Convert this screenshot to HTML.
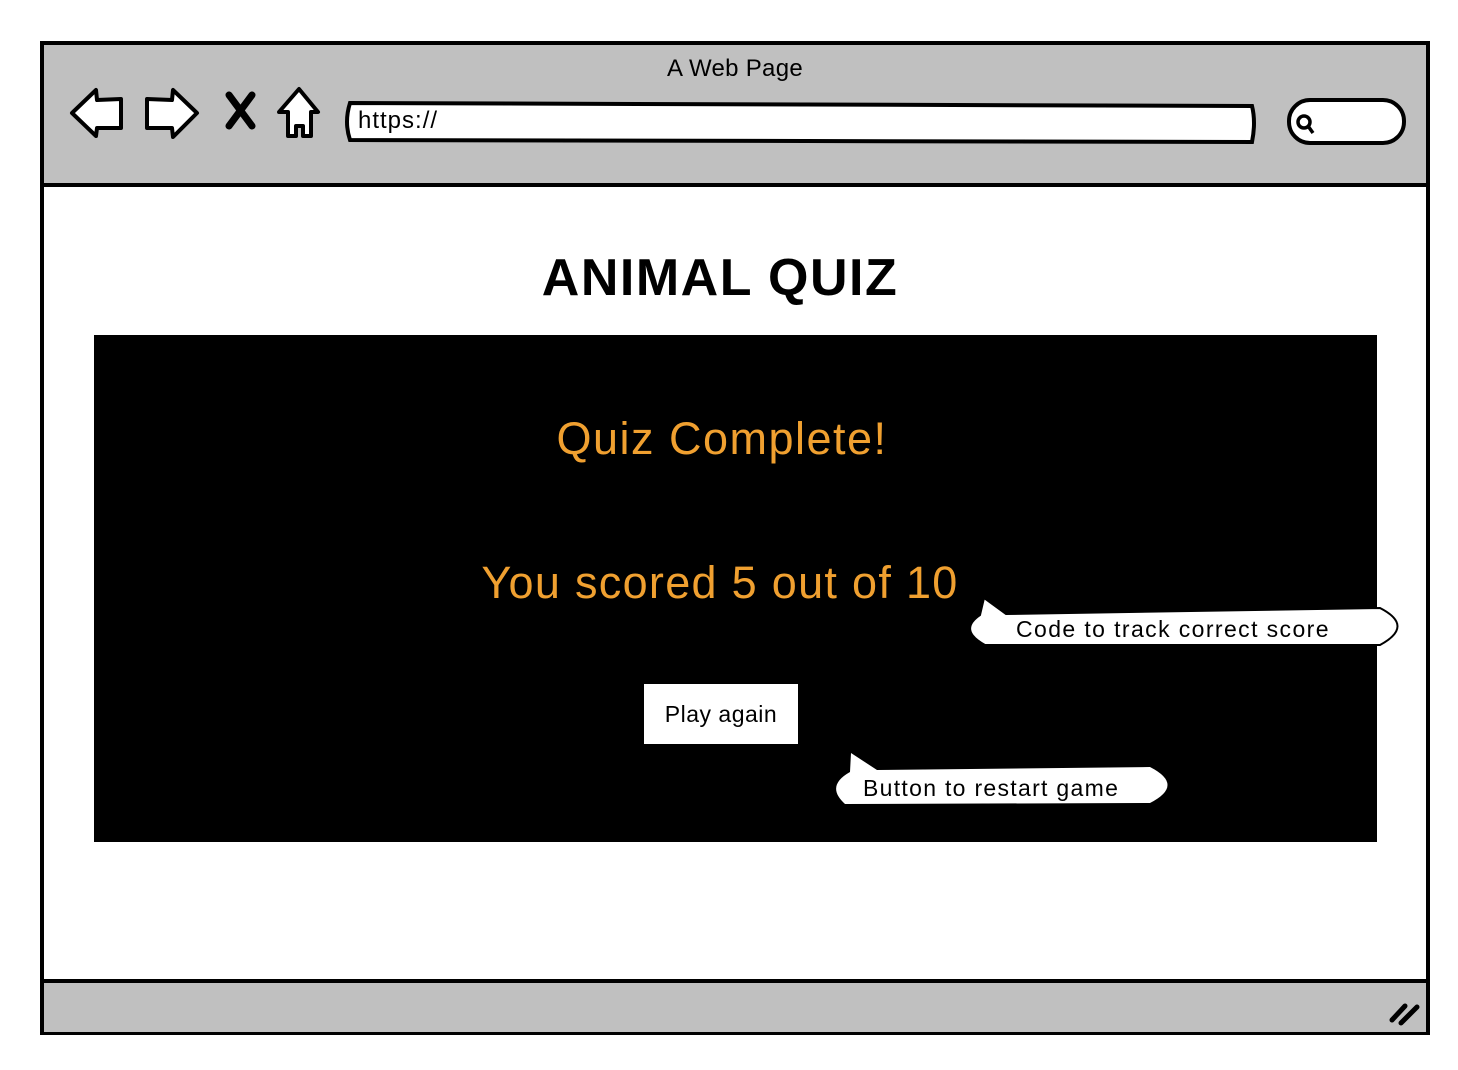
<!DOCTYPE html>
<html><head><meta charset="utf-8"><style>
body{margin:0;width:1458px;height:1070px;background:#fff;position:relative;overflow:hidden;font-family:"Liberation Sans",sans-serif}
.abs{position:absolute}
</style></head><body>
<svg class="abs" style="left:0;top:0" width="1458" height="1070">
<rect x="42" y="43" width="1386" height="990" fill="#fff" stroke="#000" stroke-width="4"/>
<rect x="44" y="45" width="1382" height="140" fill="#c0c0c0"/>
<line x1="42" y1="185" x2="1428" y2="185" stroke="#000" stroke-width="4"/>
<rect x="44" y="982" width="1382" height="50" fill="#c0c0c0"/>
<line x1="42" y1="981" x2="1428" y2="981" stroke="#000" stroke-width="4"/>
<path d="M1392 1020 L1405 1006 M1401 1023 L1417 1007" stroke="#000" stroke-width="5" stroke-linecap="round"/>
<path d="M72 113 L96 90 L97 100 L121 99 L121 128 L97 128 L96 136 Z" fill="#fff" stroke="#000" stroke-width="4" stroke-linejoin="round"/>
<path d="M197 113 L173 90 L172 100 L147 99 L147 128 L172 128 L173 137 Z" fill="#fff" stroke="#000" stroke-width="4" stroke-linejoin="round"/>
<path d="M229 95 L252 126 M252 95 L229 126" stroke="#000" stroke-width="7" stroke-linecap="round"/>
<path d="M299 89 L318 112 L311 112 L311 136 L303 136 L303 126 L296 126 L296 136 L288 136 L288 112 L279 112 Z" fill="#fff" stroke="#000" stroke-width="4" stroke-linejoin="round"/>
<path d="M350 103 L1252 106 Q1256 122 1252 142 L350 140 Q344 122 350 103 Z" fill="#fff" stroke="#000" stroke-width="4"/>
<rect x="1289" y="100" width="115" height="43" rx="21" fill="#fff" stroke="#000" stroke-width="4"/>
<circle cx="1304" cy="122" r="6" fill="none" stroke="#000" stroke-width="3.5"/>
<line x1="1308" y1="126" x2="1313" y2="133" stroke="#000" stroke-width="3.5"/>
<rect x="94" y="335" width="1283" height="507" fill="#000"/>
<rect x="644" y="684" width="154" height="60" fill="#fff"/>
<path d="M984 598 L1006 614 L1380 608 Q1415 626 1380 645 L985 645 Q958 630 980 615 Z" fill="#fff" stroke="#000" stroke-width="2"/>
<path d="M851 753 L877 770 L1150 767 Q1185 785 1150 803 L845 804 Q825 786 850 772 Z" fill="#fff"/>
</svg>
<div class="abs" style="left:0;width:1470px;top:55px;text-align:center;font-size:24px;letter-spacing:0.3px">A Web Page</div>
<div class="abs" style="left:358px;top:107px;font-size:24px;letter-spacing:1px">https://</div>
<div class="abs" style="left:0;width:1440px;top:248px;text-align:center;font-size:52px;font-weight:bold;letter-spacing:1.5px">ANIMAL QUIZ</div>
<div class="abs" style="left:0;width:1444px;top:413px;text-align:center;font-size:45px;color:#f0a030;letter-spacing:1.5px">Quiz Complete!</div>
<div class="abs" style="left:0;width:1440px;top:557px;text-align:center;font-size:45px;color:#f0a030;letter-spacing:1.3px">You scored 5 out of 10</div>
<div class="abs" style="left:644px;width:154px;top:701px;text-align:center;font-size:23px;letter-spacing:0.5px">Play again</div>
<div class="abs" style="left:1016px;top:616px;font-size:23px;letter-spacing:1.4px">Code to track correct score</div>
<div class="abs" style="left:863px;top:775px;font-size:23px;letter-spacing:1.3px">Button to restart game</div>
</body></html>
